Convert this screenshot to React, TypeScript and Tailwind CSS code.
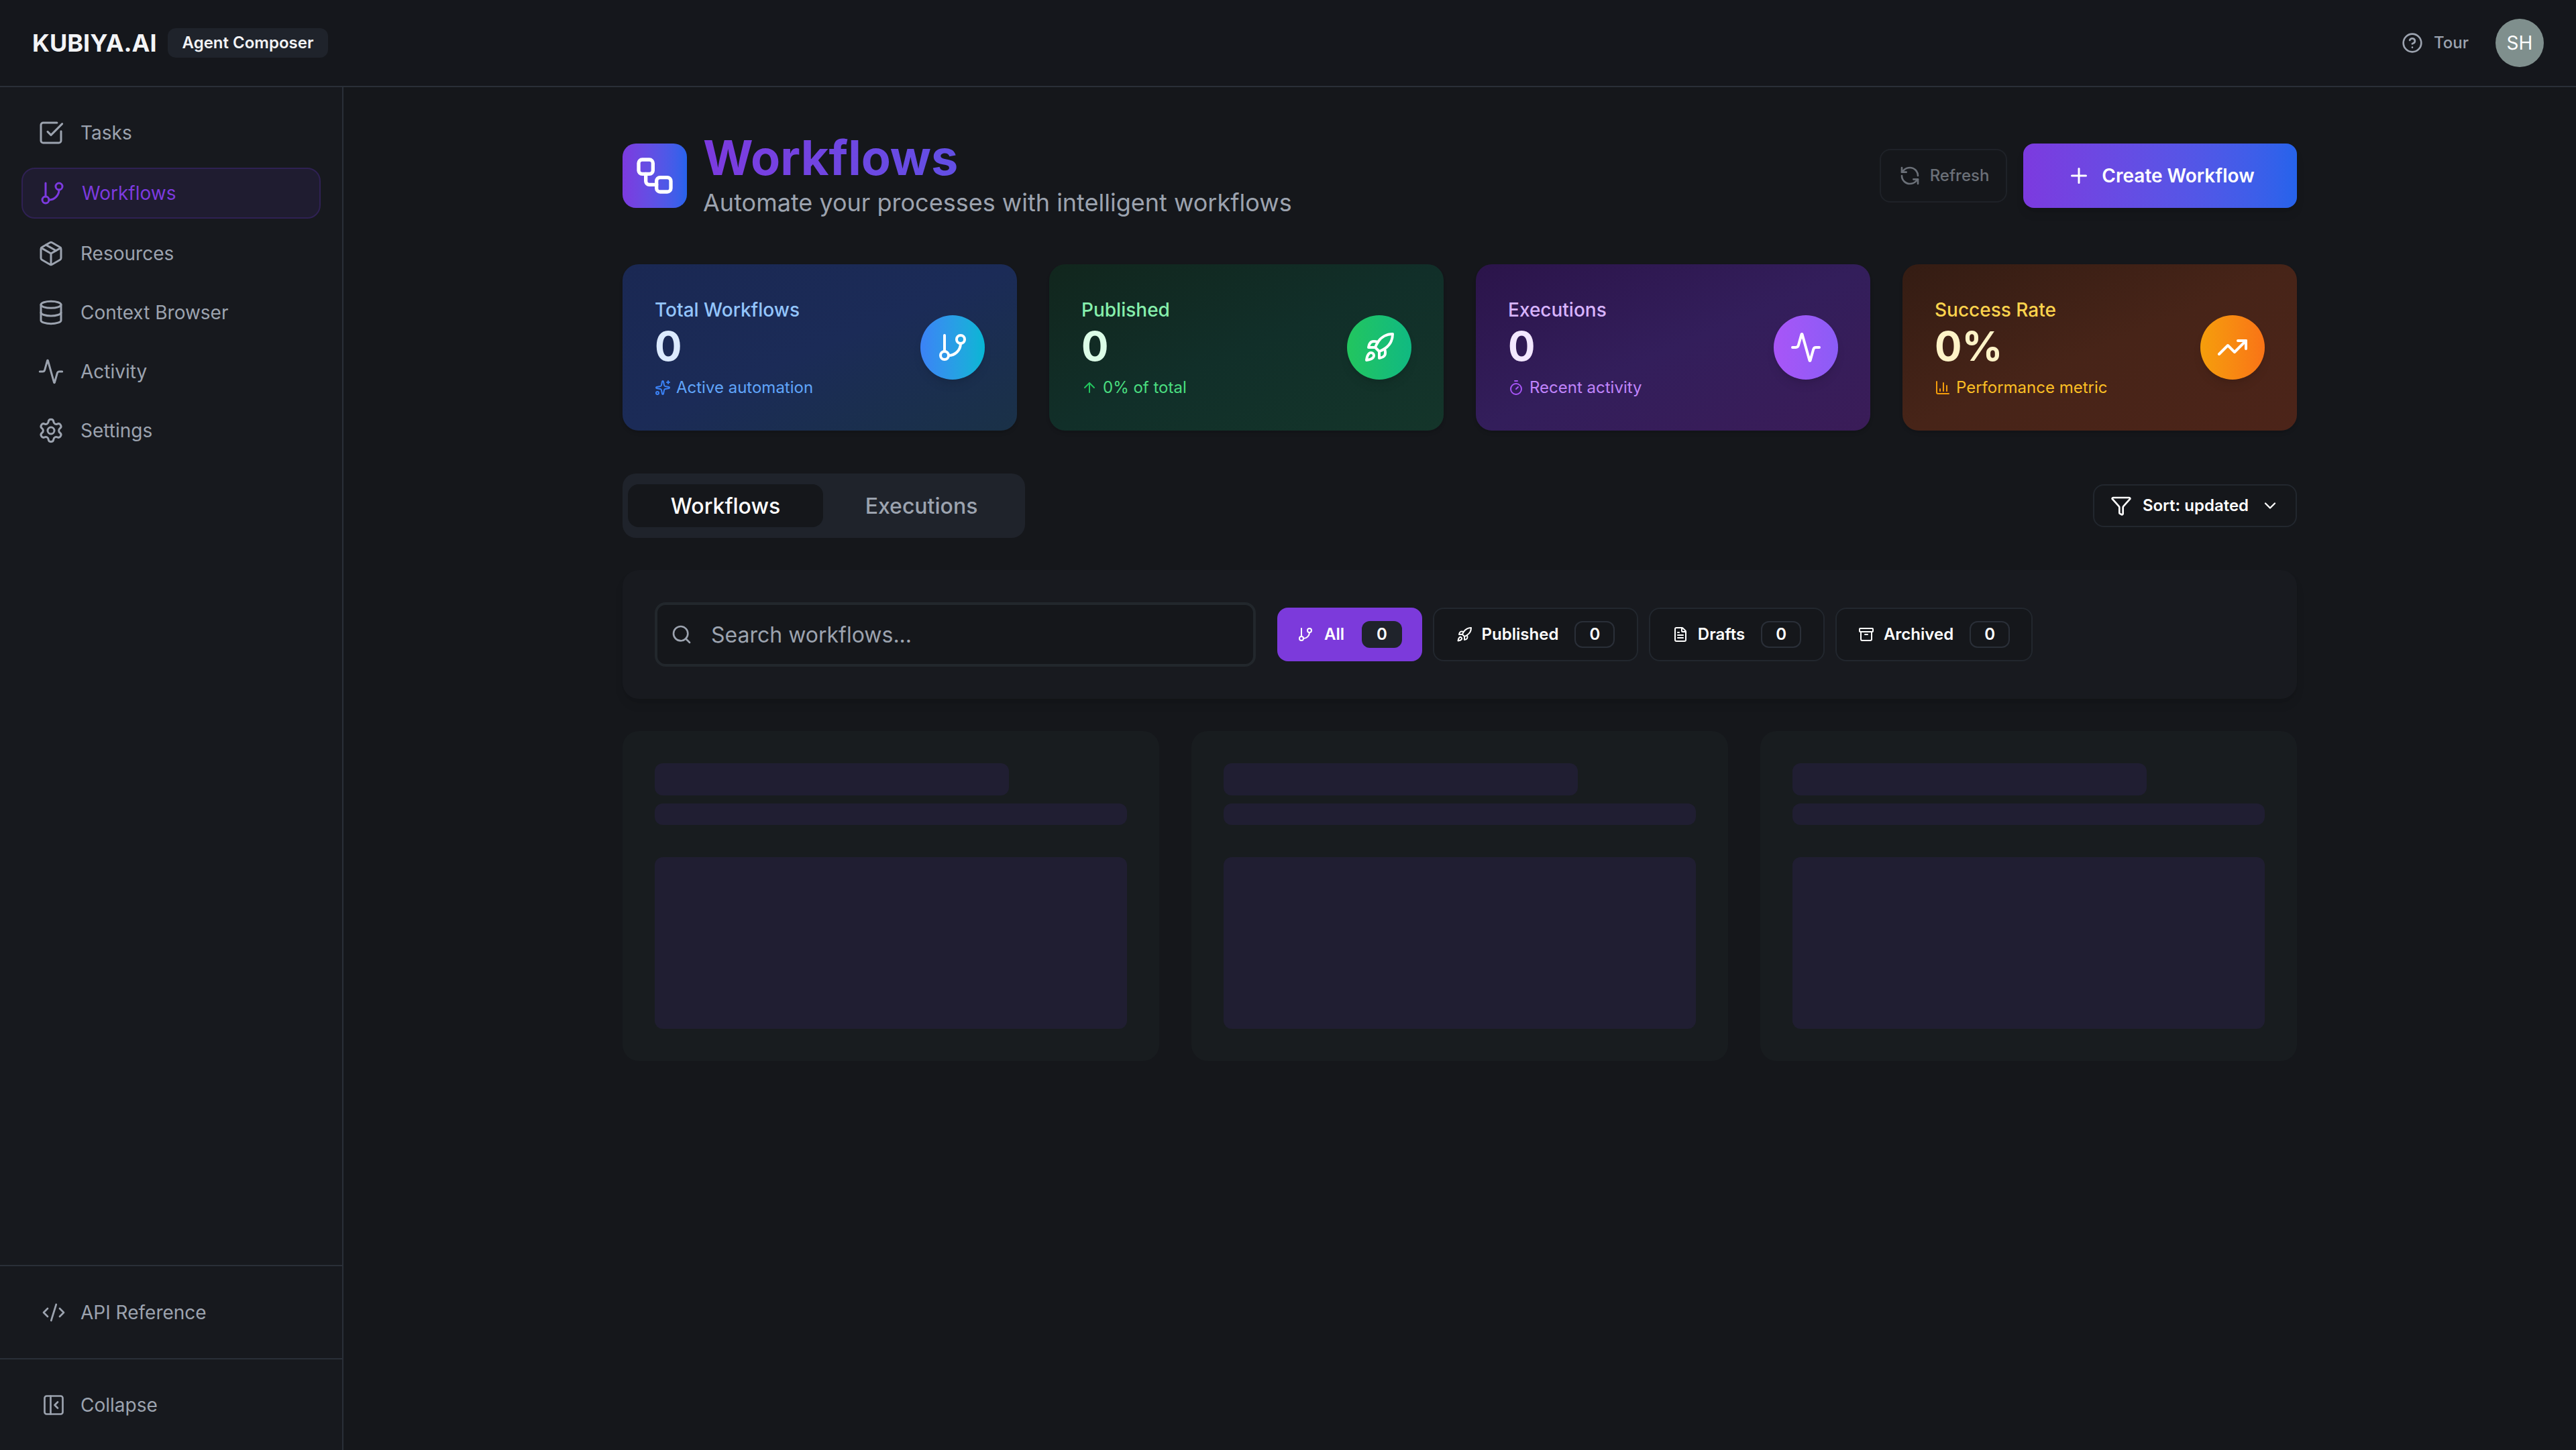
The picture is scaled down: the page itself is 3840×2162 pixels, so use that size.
import {
  Activity,
  Archive,
  ArrowUp,
  ChartColumn,
  ChevronDown,
  CircleHelp,
  CodeXml,
  Database,
  FileText,
  Funnel,
  GitBranch,
  Package,
  PanelLeftClose,
  Plus,
  RefreshCcw,
  Rocket,
  Search,
  Settings,
  Sparkles,
  SquareCheckBig,
  Timer,
  TrendingUp,
  Workflow,
} from 'lucide-react';

const NAV_ITEMS = [
  { label: 'Tasks', icon: SquareCheckBig },
  { label: 'Workflows', icon: GitBranch, active: true },
  { label: 'Resources', icon: Package },
  { label: 'Context Browser', icon: Database },
  { label: 'Activity', icon: Activity },
  { label: 'Settings', icon: Settings },
];

const STATS = [
  {
    label: 'Total Workflows',
    value: '0',
    note: 'Active automation',
    noteIcon: Sparkles,
    icon: GitBranch,
    card: 'bg-gradient-to-br from-[#1a2853] via-[#1b2b57] to-[#1a3147]',
    labelColor: 'text-[#93c5fd]',
    valueColor: 'text-[#dbeafe]',
    noteColor: 'text-[#60a5fa]',
    noteIconColor: 'text-[#3b82f6]',
    circle: 'bg-gradient-to-r from-[#3b82f6] to-[#06b6d4]',
  },
  {
    label: 'Published',
    value: '0',
    note: '0% of total',
    noteIcon: ArrowUp,
    icon: Rocket,
    card: 'bg-gradient-to-br from-[#11261d] via-[#112f29] to-[#14352a]',
    labelColor: 'text-[#86efac]',
    valueColor: 'text-[#dcfce7]',
    noteColor: 'text-[#4ade80]',
    noteIconColor: 'text-[#22c55e]',
    circle: 'bg-gradient-to-r from-[#22c55e] to-[#10b981]',
  },
  {
    label: 'Executions',
    value: '0',
    note: 'Recent activity',
    noteIcon: Timer,
    icon: Activity,
    card: 'bg-gradient-to-br from-[#2b144a] via-[#331e5b] to-[#3a1c58]',
    labelColor: 'text-[#d8b4fe]',
    valueColor: 'text-[#f3e8ff]',
    noteColor: 'text-[#c084fc]',
    noteIconColor: 'text-[#a855f7]',
    circle: 'bg-gradient-to-r from-[#a855f7] to-[#8b5cf6]',
  },
  {
    label: 'Success Rate',
    value: '0%',
    note: 'Performance metric',
    noteIcon: ChartColumn,
    icon: TrendingUp,
    card: 'bg-gradient-to-br from-[#341c13] via-[#472418] to-[#4c2419]',
    labelColor: 'text-[#fcd34d]',
    valueColor: 'text-[#fef3c7]',
    noteColor: 'text-[#fbbf24]',
    noteIconColor: 'text-[#f59e0b]',
    circle: 'bg-gradient-to-r from-[#f59e0b] to-[#f97316]',
  },
];

const FILTERS = [
  { label: 'Published', icon: Rocket, width: 'w-[306px]' },
  { label: 'Drafts', icon: FileText, width: 'w-[262px]' },
  { label: 'Archived', icon: Archive, width: 'w-[294px]' },
];

function Sidebar() {
  return (
    <aside className="flex w-[512px] shrink-0 flex-col border-r-2 border-[#2a2f38] bg-[#17191e]">
      <nav className="flex flex-1 flex-col gap-4 px-8 pt-8">
        {NAV_ITEMS.map(({ label, icon: Icon, active }) => (
          <div
            key={label}
            className={
              active
                ? 'flex h-[76px] items-center gap-6 rounded-[20px] border-2 border-[#2f2153] bg-[#1f1c30] px-6 text-[#7c3adf]'
                : 'flex h-[72px] items-center gap-6 rounded-[20px] px-6 text-[#9ca3af]'
            }
          >
            <Icon size={40} strokeWidth={1.8} />
            <span className="text-[28px] leading-[40px]">{label}</span>
          </div>
        ))}
      </nav>
      <div className="flex h-[139px] items-center gap-[22px] border-t-2 border-[#2a2f38] pl-[62px] text-[#9ca3af]">
        <CodeXml size={36} strokeWidth={1.8} />
        <span className="text-[28px]">API Reference</span>
      </div>
      <div className="flex h-[137px] items-center gap-[22px] border-t-2 border-[#2a2f38] pl-[62px] text-[#9ca3af]">
        <PanelLeftClose size={36} strokeWidth={1.8} />
        <span className="text-[28px]">Collapse</span>
      </div>
    </aside>
  );
}

function StatCard({ stat }: { stat: (typeof STATS)[number] }) {
  const NoteIcon = stat.noteIcon;
  const Icon = stat.icon;
  return (
    <div className={`flex h-[248px] items-center justify-between rounded-[24px] p-12 shadow-md ${stat.card}`}>
      <div className="flex flex-col">
        <span className={`text-[28px] font-medium leading-[40px] ${stat.labelColor}`}>{stat.label}</span>
        <span className={`mt-[-2px] text-[60px] font-bold leading-[72px] ${stat.valueColor}`}>{stat.value}</span>
        <div className={`mt-[10px] flex items-center gap-2 text-[24px] leading-[32px] ${stat.noteColor}`}>
          <NoteIcon size={24} className={stat.noteIconColor} />
          <span>{stat.note}</span>
        </div>
      </div>
      <div className={`flex h-24 w-24 items-center justify-center rounded-full text-white shadow-lg ${stat.circle}`}>
        <Icon size={48} strokeWidth={2} />
      </div>
    </div>
  );
}

function SkeletonCard() {
  return (
    <div className="flex h-[492px] flex-col rounded-[24px] bg-[#181c1f] p-12">
      <div className="h-12 w-[75%] rounded-[12px] bg-[#201e32]" />
      <div className="mt-3 h-8 w-full rounded-[12px] bg-[#201e32]" />
      <div className="mt-12 h-64 w-full rounded-[12px] bg-[#201e32]" />
    </div>
  );
}

export default function App() {
  return (
    <div
      className="flex h-[2162px] w-full flex-col overflow-hidden bg-[#15171b] text-white"
      style={{ fontFamily: 'Inter, "Liberation Sans", sans-serif' }}
    >
      <header className="flex h-[130px] shrink-0 items-center justify-between border-b-2 border-[#2a2f38] bg-[#15171c] pl-12 pr-12">
        <div className="flex items-center gap-4">
          <span className="text-[36px] font-bold leading-[40px] text-[#f3f4f6]">KUBIYA.AI</span>
          <span className="flex h-[44px] items-center rounded-[12px] bg-[#1f232b] px-[22px] text-[24px] font-semibold text-[#f3f4f6]">
            Agent Composer
          </span>
        </div>
        <div className="flex items-center">
          <div className="flex items-center gap-4 text-[#9ca3af]">
            <CircleHelp size={32} strokeWidth={2} />
            <span className="text-[24px] font-medium">Tour</span>
          </div>
          <div className="ml-10 flex h-[72px] w-[72px] items-center justify-center rounded-full bg-[#7f8f8d] text-[28px] text-white">
            SH
          </div>
        </div>
      </header>

      <div className="flex min-h-0 flex-1">
        <Sidebar />
        <main className="flex-1">
          <div className="mx-auto w-[2496px] pt-[64px]">
            <div className="flex h-[136px] items-center justify-between">
              <div className="flex items-center gap-6">
                <div className="flex h-24 w-24 items-center justify-center rounded-[20px] bg-gradient-to-r from-[#7c3adf] to-[#2563eb] text-white">
                  <Workflow size={64} strokeWidth={2} />
                </div>
                <div className="flex flex-col">
                  <h1 className="bg-gradient-to-r from-[#7c3adf] to-[#2563eb] bg-clip-text text-[72px] font-bold leading-[80px] text-transparent">
                    Workflows
                  </h1>
                  <p className="mt-[-1px] text-[36px] leading-[56px] text-[#9ca3af]">
                    Automate your processes with intelligent workflows
                  </p>
                </div>
              </div>
              <div className="flex items-center gap-6">
                <button className="flex h-20 w-[190px] items-center justify-center gap-[14px] rounded-[16px] border-2 border-[#1f2228] pl-[2px] text-[24px] font-medium text-[#6b7078]">
                  <RefreshCcw size={32} strokeWidth={2} />
                  Refresh
                </button>
                <button className="flex h-24 w-[408px] items-center justify-center gap-4 rounded-[16px] bg-gradient-to-r from-[#7c3adf] to-[#2563eb] pl-[2px] text-[28px] font-semibold text-white shadow-lg">
                  <Plus size={36} strokeWidth={2} />
                  Create Workflow
                </button>
              </div>
            </div>

            <div className="mt-[64px] grid grid-cols-4 gap-12">
              {STATS.map((stat) => (
                <StatCard key={stat.label} stat={stat} />
              ))}
            </div>

            <div className="mt-16 flex items-center justify-between">
              <div className="flex h-24 w-[600px] items-center gap-0 rounded-[20px] bg-[#1f232b] px-2">
                <div className="flex h-16 w-[291px] items-center justify-center rounded-[16px] bg-[#15171b] pt-[2px] text-[32px] font-medium text-white">
                  Workflows
                </div>
                <div className="flex h-16 flex-1 items-center justify-center pt-[2px] text-[32px] font-medium text-[#9ca3af]">
                  Executions
                </div>
              </div>
              <button className="flex h-16 w-[304px] items-center justify-center gap-3 rounded-[16px] border-2 border-[#22272e] bg-[#15171b] text-[24px] font-semibold text-white">
                <Funnel size={32} strokeWidth={2} />
                <span className="pl-[4px]">Sort: updated</span>
                <ChevronDown size={28} strokeWidth={2} className="ml-[6px]" />
              </button>
            </div>

            <div className="mt-12 flex h-[192px] items-center gap-8 rounded-[24px] bg-[#181a1f] px-12 shadow-lg">
              <div className="flex h-24 w-[896px] items-center gap-7 rounded-[16px] border-4 border-[#22272c] bg-[#15171b] pl-5">
                <Search size={32} strokeWidth={2} className="text-[#9ca3af]" />
                <span className="pt-[2px] text-[32px] leading-[40px] text-[#9ca3af]">Search workflows...</span>
              </div>
              <div className="flex items-center gap-4">
                <div className="flex h-20 w-[216px] items-center justify-center gap-4 rounded-[16px] bg-[#7c3adb] text-[24px] font-semibold text-white">
                  <GitBranch size={24} strokeWidth={2} />
                  All
                  <span className="ml-[10px] flex h-10 w-[60px] items-center justify-center rounded-[12px] bg-[#1f232b] text-[24px]">0</span>
                </div>
                {FILTERS.map(({ label, icon: Icon, width }) => (
                  <div
                    key={label}
                    className={`flex h-20 items-center justify-center gap-[14px] rounded-[16px] border-2 border-[#22272e] bg-[#15171b] text-[24px] font-semibold text-white ${width}`}
                  >
                    <Icon size={24} strokeWidth={2} />
                    {label}
                    <span className="ml-[10px] flex h-10 w-[60px] items-center justify-center rounded-[12px] border-2 border-[#2a2f38] text-[24px]">0</span>
                  </div>
                ))}
              </div>
            </div>

            <div className="mt-12 grid grid-cols-3 gap-12">
              <SkeletonCard />
              <SkeletonCard />
              <SkeletonCard />
            </div>
          </div>
        </main>
      </div>
    </div>
  );
}
